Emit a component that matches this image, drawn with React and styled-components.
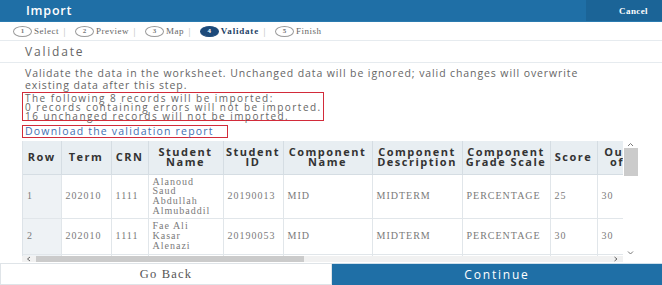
import React from "react";
import styled, { createGlobalStyle } from "styled-components";

const GlobalStyle = createGlobalStyle`
  html, body {
    margin: 0;
    padding: 0;
    background: #ffffff;
  }
  body {
    font-family: "Open Sans", "Liberation Sans", sans-serif;
  }
  #root {
    width: 662px;
    height: 285px;
    overflow: hidden;
  }
`;

const SANS = `"Open Sans", "Liberation Sans", sans-serif`;
const SERIF = `"Liberation Serif", "DejaVu Serif", serif`;
const BLUE = "#1f6fa6";

const Frame = styled.div`
  display: flex;
  flex-direction: column;
  width: 662px;
  height: 285px;
  background: #fff;
`;

const TopBar = styled.header`
  display: flex;
  align-items: stretch;
  height: 22px;
  background: ${BLUE};
  border-bottom: 1px solid #2b7bb0;
  box-sizing: border-box;
`;

const Title = styled.div`
  flex: 1;
  display: flex;
  align-items: center;
  padding-left: 26px;
  color: #fff;
  font-family: ${SANS};
  font-size: 12.5px;
  font-weight: 600;
  letter-spacing: 0.8px;
`;

const CancelButton = styled.div`
  width: 76px;
  display: flex;
  align-items: center;
  justify-content: flex-end;
  padding-right: 14px;
  box-sizing: border-box;
  background: #1b6497;
  color: #fff;
  font-family: ${SERIF};
  font-size: 9px;
  font-weight: bold;
  letter-spacing: 0.4px;
`;

const Steps = styled.nav`
  display: flex;
  align-items: center;
  height: 19px;
  padding-left: 13px;
  border-bottom: 1px solid #e6ebef;
  box-sizing: border-box;
`;

const Step = styled.div`
  display: flex;
  align-items: center;
  gap: 2px;
  font-family: ${SERIF};
  font-size: 9px;
  color: ${(p) => (p.$active ? "#1d3f66" : "#666")};
  font-weight: ${(p) => (p.$active ? "bold" : "normal")};
  letter-spacing: ${(p) => (p.$active ? "0.8px" : "0.5px")};
`;

const StepNum = styled.span`
  display: inline-flex;
  align-items: center;
  justify-content: center;
  width: 17px;
  height: 9px;
  border-radius: 50%;
  border: 1px solid ${(p) => (p.$active ? "#1d4a7a" : "#9a9a9a")};
  background: ${(p) => (p.$active ? "#1d4a7a" : "transparent")};
  color: ${(p) => (p.$active ? "#fff" : "#777")};
  font-size: 7px;
  font-weight: bold;
  letter-spacing: 0;
`;

const Divider = styled.span`
  margin: 0 8px 0 3px;
  color: #c8c8c8;
  font-size: 9px;
`;

const SectionTitle = styled.h2`
  margin: 0;
  height: 22px;
  display: flex;
  align-items: center;
  padding-left: 25px;
  font-family: ${SANS};
  font-size: 12px;
  font-weight: normal;
  letter-spacing: 1.8px;
  color: #666;
  border-bottom: 1px solid #e6ebef;
  box-sizing: border-box;
`;

const Content = styled.main`
  flex: 1;
  display: flex;
  flex-direction: column;
  padding: 4px 0 0 22px;
  min-height: 0;
`;

const Intro = styled.p`
  margin: 0 0 1px;
  padding-left: 3px;
  font-family: ${SANS};
  font-size: 10.5px;
  line-height: 12px;
  letter-spacing: 0.9px;
  color: #666;
  width: 598px;
`;

const Outlined = styled.div`
  align-self: flex-start;
  width: ${(p) => p.$w}px;
  box-sizing: border-box;
  border: 1px solid #d22b3a;
  padding-left: 2px;
  font-family: ${SANS};
  white-space: nowrap;
`;

const Summary = styled(Outlined)`
  font-size: 10px;
  letter-spacing: 1.45px;
  line-height: 9.2px;
  padding-top: 0.5px;
  height: 29px;
  color: #666;
  margin-bottom: 4px;
`;

const ReportLink = styled(Outlined)`
  font-size: 10.5px;
  letter-spacing: 1.2px;
  height: 13px;
  line-height: 11px;
  color: #3f6fb3;
  margin-bottom: 3px;
`;

const TableArea = styled.div`
  display: grid;
  grid-template-columns: 601px 15px;
  grid-template-rows: 115px 7px;
`;

const Viewport = styled.div`
  overflow: hidden;
  border-left: 1px solid #dde3e8;
`;

const Table = styled.table`
  table-layout: fixed;
  border-collapse: collapse;
  width: 614px;
`;

const Th = styled.th`
  height: 33px;
  padding: 0 2px;
  box-sizing: border-box;
  background: #e8eef2;
  border-right: 1px solid #d5dde3;
  border-bottom: 1px solid #d5dde3;
  font-family: ${SANS};
  font-size: 11px;
  font-weight: bold;
  line-height: 10px;
  letter-spacing: 1.5px;
  color: #333;
  text-align: center;
  white-space: pre;
  overflow: hidden;
`;

const Td = styled.td`
  height: ${(p) => p.$h}px;
  padding: 0 4px;
  box-sizing: border-box;
  background: ${(p) => (p.$shade ? "#eef2f5" : "#fff")};
  border-right: 1px solid #e1e6ea;
  border-bottom: 1px solid #e1e6ea;
  font-family: ${SERIF};
  font-size: 10px;
  line-height: 9.7px;
  letter-spacing: 1px;
  color: #7a7a7a;
  vertical-align: middle;
  white-space: pre;
  overflow: hidden;
`;

const VScroll = styled.div`
  display: flex;
  flex-direction: column;
  align-items: stretch;
  background: #fff;
`;

const Arrow = styled.div`
  height: 7px;
  display: flex;
  align-items: center;
  justify-content: center;
  color: #777;
`;

const VThumb = styled.div`
  height: 28px;
  margin-left: 1px;
  background: #cbcbcb;
`;

const Spacer = styled.div`
  flex: 1;
`;

const HScroll = styled.div`
  display: flex;
  align-items: center;
  background: #f1f1f1;
  height: 6px;
`;

const HArrow = styled.div`
  width: 14px;
  display: flex;
  align-items: center;
  justify-content: center;
  color: #666;
`;

const HThumb = styled.div`
  width: 268px;
  height: 6px;
  background: #cbcbcb;
`;

const Footer = styled.footer`
  display: flex;
  height: 22px;
`;

const FooterButton = styled.button`
  flex: 1;
  margin: 0;
  padding: 0;
  line-height: 20px;
  cursor: pointer;
`;

const GoBack = styled(FooterButton)`
  border: 1px solid #dfe4e8;
  background: #fff;
  font-family: ${SERIF};
  font-size: 12.5px;
  letter-spacing: 1.2px;
  color: #555;
`;

const Continue = styled(FooterButton)`
  border: none;
  border-top: 1px solid #cfe0ec;
  background: ${BLUE};
  font-family: ${SANS};
  font-size: 12px;
  letter-spacing: 1.8px;
  color: #fff;
`;

const Chevron = ({ dir }) => {
  const pts = {
    up: "1,4 3.5,1.5 6,4",
    down: "1,1.5 3.5,4 6,1.5",
    left: "4,1 1.5,3 4,5",
    right: "1.5,1 4,3 1.5,5",
  }[dir];
  const vertical = dir === "up" || dir === "down";
  return (
    <svg width={vertical ? 7 : 6} height="6" viewBox={vertical ? "0 0 7 6" : "0 0 6 6"}>
      <polyline points={pts} fill="none" stroke="currentColor" strokeWidth="1" />
    </svg>
  );
};

const steps = ["Select", "Preview", "Map", "Validate", "Finish"];

const columns = [
  { label: "Row", w: 38 },
  { label: "Term", w: 50 },
  { label: "CRN", w: 37 },
  { label: "Student\nName", w: 75 },
  { label: "Student\nID", w: 60 },
  { label: "Component\nName", w: 89 },
  { label: "Component\nDescription", w: 90 },
  { label: "Component\nGrade Scale", w: 88 },
  { label: "Score", w: 47 },
  { label: "Out\nof", w: 40 },
];

const rows = [
  { h: 44, cells: ["1", "202010", "1111", "Alanoud\nSaud\nAbdullah\nAlmubaddil", "20190013", "MID", "MIDTERM", "PERCENTAGE", "25", "30"] },
  { h: 36, cells: ["2", "202010", "1111", "Fae Ali\nKasar\nAlenazi", "20190053", "MID", "MIDTERM", "PERCENTAGE", "30", "30"] },
  { h: 40, cells: ["3", "202010", "1111", "Areej\nSaad\nAlqahtani", "20190071", "MID", "MIDTERM", "PERCENTAGE", "28", "30"] },
];

export default function App() {
  return (
    <>
      <GlobalStyle />
      <Frame>
        <TopBar>
          <Title>Import</Title>
          <CancelButton>Cancel</CancelButton>
        </TopBar>

        {/* wizard steps */}
        <Steps>
          {steps.map((s, i) => {
            const active = s === "Validate";
            return (
              <React.Fragment key={s}>
                <Step $active={active}>
                  <StepNum $active={active}>{i + 1}</StepNum>
                  {s}
                </Step>
                {i < steps.length - 1 && <Divider>|</Divider>}
              </React.Fragment>
            );
          })}
        </Steps>

        <SectionTitle>Validate</SectionTitle>

        <Content>
          <Intro>
            Validate the data in the worksheet. Unchanged data will be ignored; valid changes will overwrite
            existing data after this step.
          </Intro>
          <Summary $w={302}>
            The following 8 records will be imported:
            <br />0 records containing errors will not be imported.
            <br />16 unchanged records will not be imported.
          </Summary>
          <ReportLink $w={206}>Download the validation report</ReportLink>

          {/* results grid with its scrollbars */}
          <TableArea>
            <Viewport>
              <Table>
                <colgroup>
                  {columns.map((c) => (
                    <col key={c.label} style={{ width: c.w }} />
                  ))}
                </colgroup>
                <thead>
                  <tr>
                    {columns.map((c) => (
                      <Th key={c.label}>{c.label}</Th>
                    ))}
                  </tr>
                </thead>
                <tbody>
                  {rows.map((r) => (
                    <tr key={r.cells[0]}>
                      {r.cells.map((v, i) => (
                        <Td key={i} $h={r.h} $shade={i === 0}>
                          {v}
                        </Td>
                      ))}
                    </tr>
                  ))}
                </tbody>
              </Table>
            </Viewport>
            <VScroll>
              <Arrow>
                <Chevron dir="up" />
              </Arrow>
              <VThumb />
              <Spacer />
              <Arrow>
                <Chevron dir="down" />
              </Arrow>
            </VScroll>
            <HScroll>
              <HArrow>
                <Chevron dir="left" />
              </HArrow>
              <HThumb />
              <Spacer />
              <HArrow>
                <Chevron dir="right" />
              </HArrow>
            </HScroll>
            <div />
          </TableArea>
        </Content>

        <Footer>
          <GoBack>Go Back</GoBack>
          <Continue>Continue</Continue>
        </Footer>
      </Frame>
    </>
  );
}
